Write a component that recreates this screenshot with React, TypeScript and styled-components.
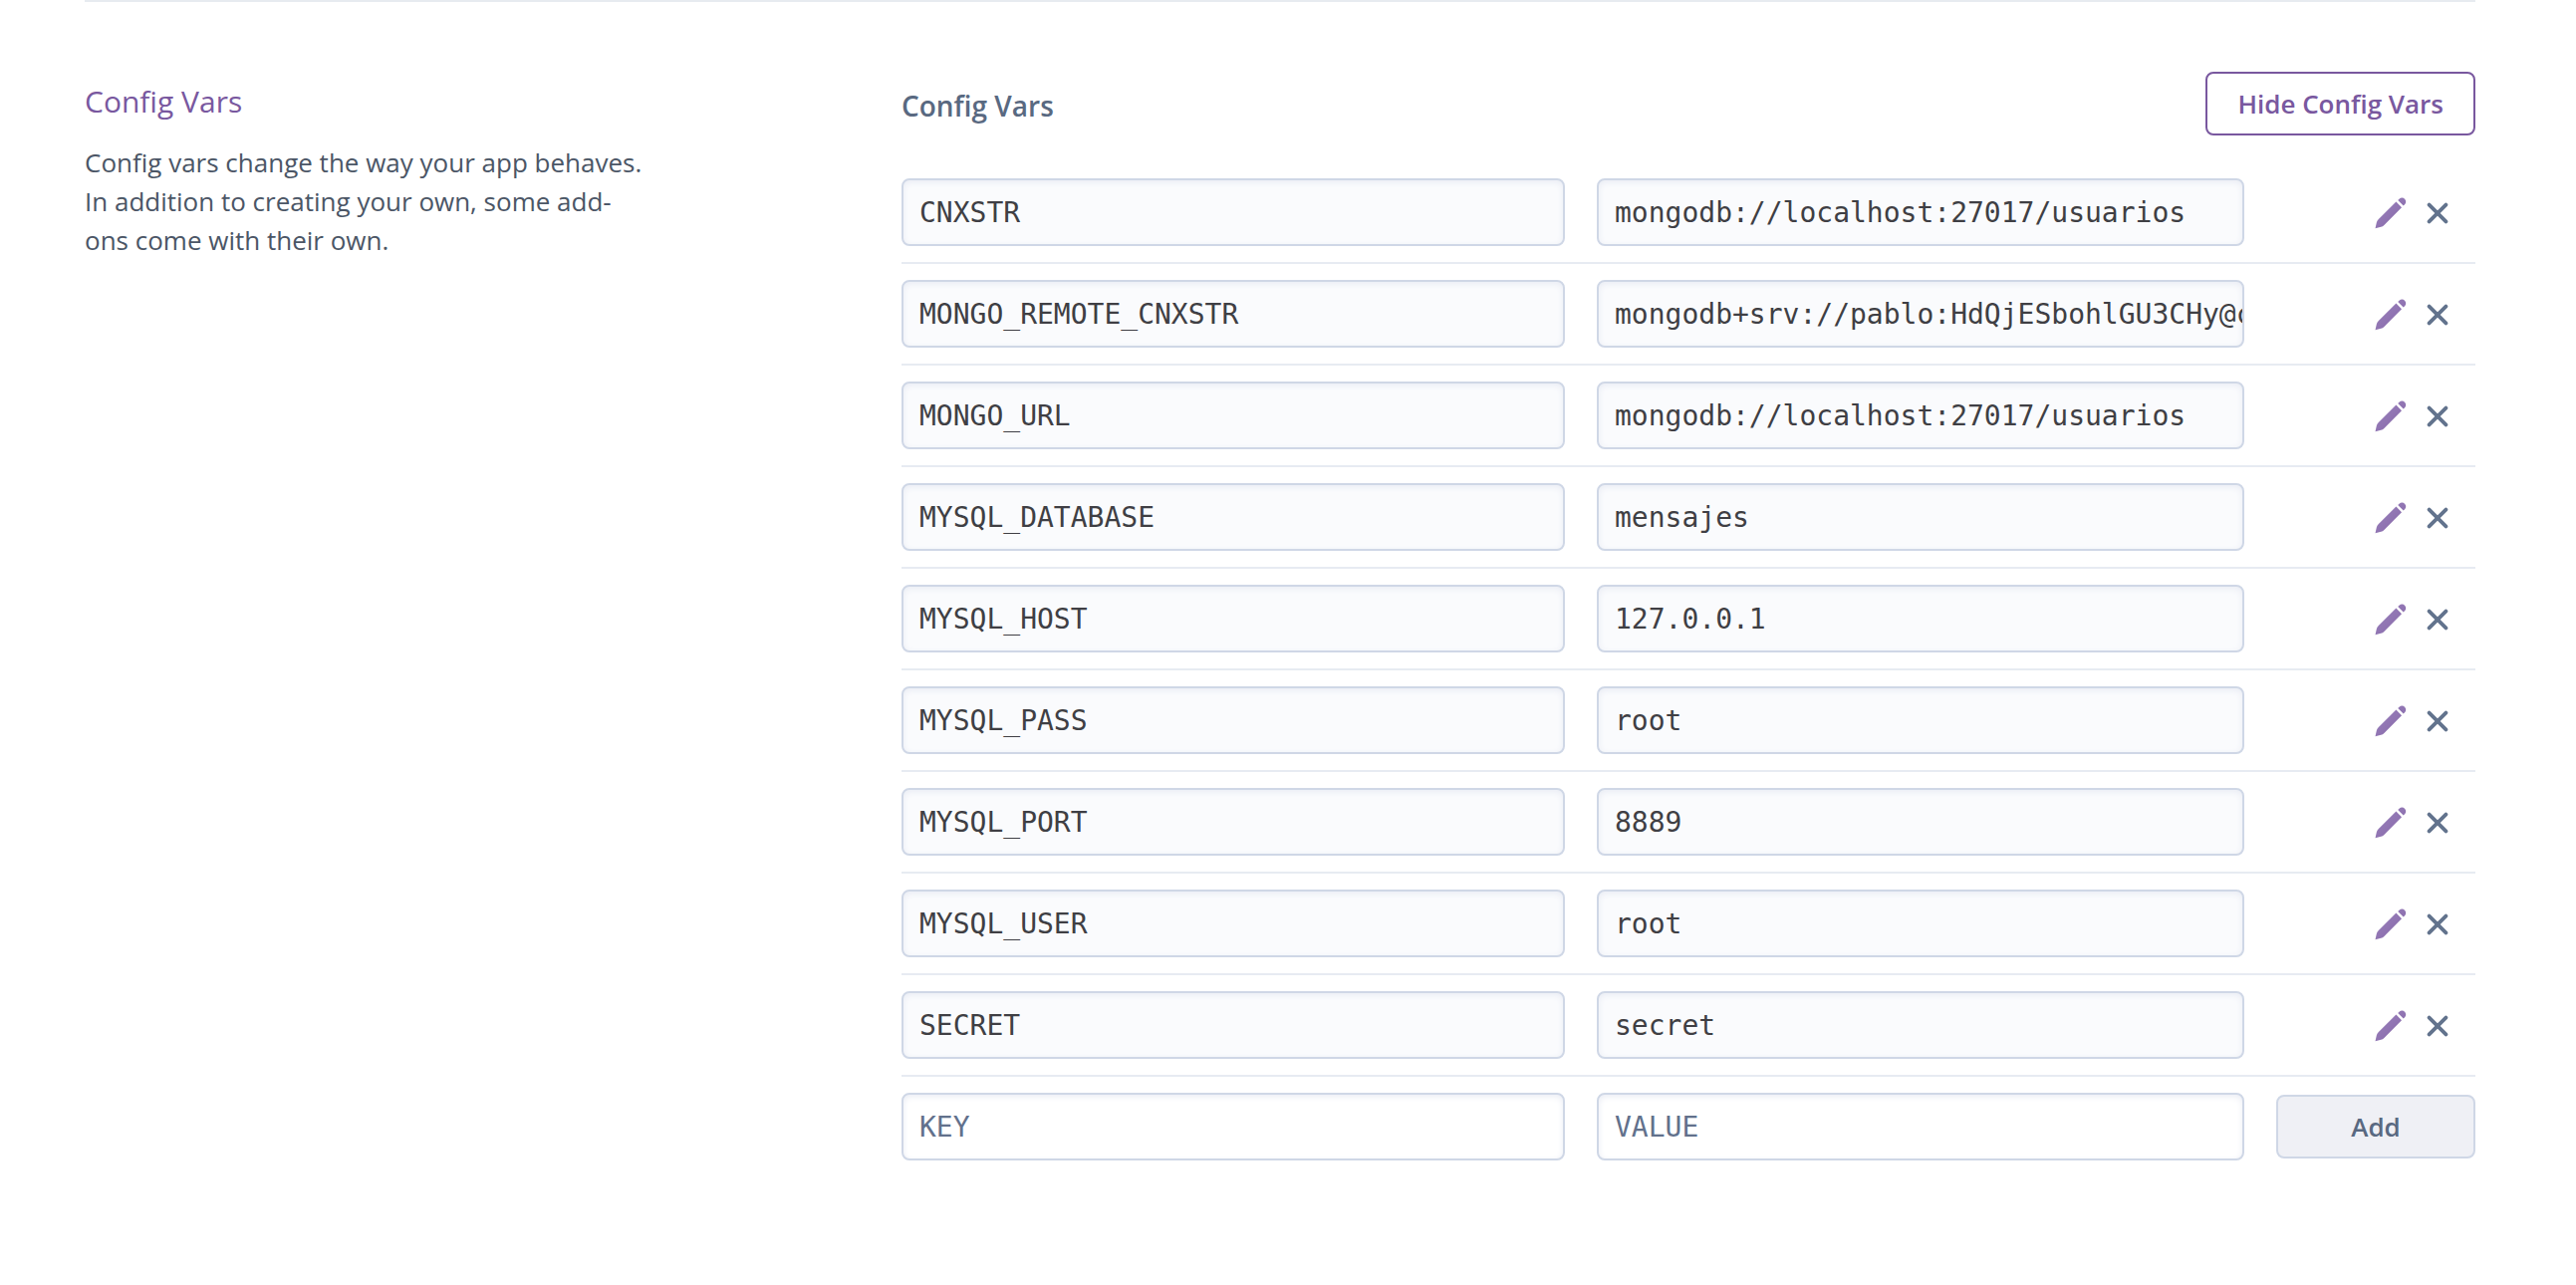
import React, { useState } from "react";
import styled, { createGlobalStyle } from "styled-components";

const sans = '"Open Sans", "Noto Sans", sans-serif';
const mono = '"DejaVu Sans Mono", "Liberation Mono", monospace';

const GlobalStyle = createGlobalStyle`
  *, *::before, *::after { box-sizing: border-box; }
  body { margin: 0; background: #fff; font-family: ${sans}; }
`;

const Page = styled.main`
  padding: 0 101px 0 85px;
`;

const Section = styled.section`
  display: grid;
  grid-template-columns: minmax(0, 820fr) minmax(0, 1580fr);
  border-top: 2px solid #e7ebf0;
  padding: 70px 0 126px;
`;

const Intro = styled.div`
  padding-top: 8px;
`;

const IntroTitle = styled.h2`
  margin: 0;
  font-size: 30px;
  line-height: 44px;
  font-weight: 400;
  color: #79589f;
`;

const IntroText = styled.p`
  margin: 20px 0 0;
  max-width: 570px;
  font-size: 26px;
  line-height: 39px;
  color: #4b5666;
`;

const PanelHeader = styled.header`
  display: flex;
  align-items: center;
  justify-content: space-between;
  margin-bottom: 27px;
`;

const PanelTitle = styled.h3`
  margin: 0;
  padding-top: 4px;
  font-size: 28px;
  line-height: 40px;
  font-weight: 600;
  color: #596981;
`;

const Button = styled.button<{ $primary?: boolean }>`
  height: 64px;
  padding: 0 30px;
  border: 2px solid ${(p) => (p.$primary ? "#79589f" : "#cfd7e6")};
  border-radius: 8px;
  background: ${(p) => (p.$primary ? "#fff" : "#eff0f5")};
  color: ${(p) => (p.$primary ? "#79589f" : "#596981")};
  font: 600 26px/36px ${sans};
  cursor: pointer;
`;

const Row = styled.div`
  display: grid;
  grid-template-columns: minmax(0, 666fr) minmax(0, 650fr) 200px;
  column-gap: 32px;
  align-items: center;
  padding: 16px 0;

  & + & { border-top: 2px solid #e7ebf2; }
`;

const Field = styled.input`
  width: 100%;
  height: 68px;
  padding: 0 0 0 16px;
  border: 2px solid #cfd7e6;
  border-radius: 8px;
  background: #fff;
  box-shadow: inset 0 2px 6px #e9ecf4;
  color: #3f3f44;
  font: 400 28px/36px ${mono};
  outline: none;

  &:read-only { background: #fafbfd; }
  &::placeholder { color: #62718c; opacity: 1; }
`;

const Actions = styled.div`
  display: flex;
  justify-content: flex-end;
  gap: 11px;
  padding: 2px 20px 0 0;
`;

const IconButton = styled.button`
  display: flex;
  align-items: center;
  justify-content: center;
  width: 36px;
  height: 36px;
  padding: 0;
  border: 0;
  background: none;
  cursor: pointer;
`;

const PencilIcon = () => (
  <svg width="32" height="32" viewBox="0 0 32 32" aria-hidden="true">
    <defs>
      <linearGradient id="pencil" x1="0" y1="0" x2="1" y2="1">
        <stop offset="0" stopColor="#9d85bf" />
        <stop offset="1" stopColor="#8465a6" />
      </linearGradient>
    </defs>
    <path
      fill="url(#pencil)"
      d="M.5 31.2 1.8 25.4Q2.2 23.6 3.6 22.2L21.4 4.6 27 10.2 9.4 27.9Q8 29.3 6.2 29.7ZM23.2 3 24.8 1.5C26.4.2 28.6.3 30 1.8 31.5 3.3 31.6 5.4 30.3 7L28.7 8.6Z"
    />
  </svg>
);

const CloseIcon = () => (
  <svg width="22" height="22" viewBox="0 0 22 22" aria-hidden="true">
    <path d="M2.6 2.6 19.4 19.4M19.4 2.6 2.6 19.4" fill="none" stroke="#62738d" strokeWidth="3.8" strokeLinecap="round" />
  </svg>
);

const configVars = [
  { key: "CNXSTR", value: "mongodb://localhost:27017/usuarios" },
  { key: "MONGO_REMOTE_CNXSTR", value: "mongodb+srv://pablo:HdQjESbohlGU3CHy@c" },
  { key: "MONGO_URL", value: "mongodb://localhost:27017/usuarios" },
  { key: "MYSQL_DATABASE", value: "mensajes" },
  { key: "MYSQL_HOST", value: "127.0.0.1" },
  { key: "MYSQL_PASS", value: "root" },
  { key: "MYSQL_PORT", value: "8889" },
  { key: "MYSQL_USER", value: "root" },
  { key: "SECRET", value: "secret" },
];

export default function App() {
  const [newKey, setNewKey] = useState("");
  const [newValue, setNewValue] = useState("");

  return (
    <>
      <GlobalStyle />
      <Page>
        <Section>
          <Intro>
            <IntroTitle>Config Vars</IntroTitle>
            <IntroText>
              Config vars change the way your app behaves. In addition to creating your own, some add-ons come with
              their own.
            </IntroText>
          </Intro>
          <div>
            <PanelHeader>
              <PanelTitle>Config Vars</PanelTitle>
              <Button type="button" $primary>
                Hide Config Vars
              </Button>
            </PanelHeader>
            {configVars.map((item) => (
              <Row key={item.key}>
                <Field readOnly aria-label={`${item.key} key`} value={item.key} />
                <Field readOnly aria-label={`${item.key} value`} value={item.value} />
                <Actions>
                  <IconButton type="button" aria-label={`Edit ${item.key}`}>
                    <PencilIcon />
                  </IconButton>
                  <IconButton type="button" aria-label={`Remove ${item.key}`}>
                    <CloseIcon />
                  </IconButton>
                </Actions>
              </Row>
            ))}
            <Row>
              <Field
                aria-label="New key"
                placeholder="KEY"
                value={newKey}
                onChange={(e) => setNewKey(e.target.value)}
              />
              <Field
                aria-label="New value"
                placeholder="VALUE"
                value={newValue}
                onChange={(e) => setNewValue(e.target.value)}
              />
              <Button type="button">Add</Button>
            </Row>
          </div>
        </Section>
      </Page>
    </>
  );
}
